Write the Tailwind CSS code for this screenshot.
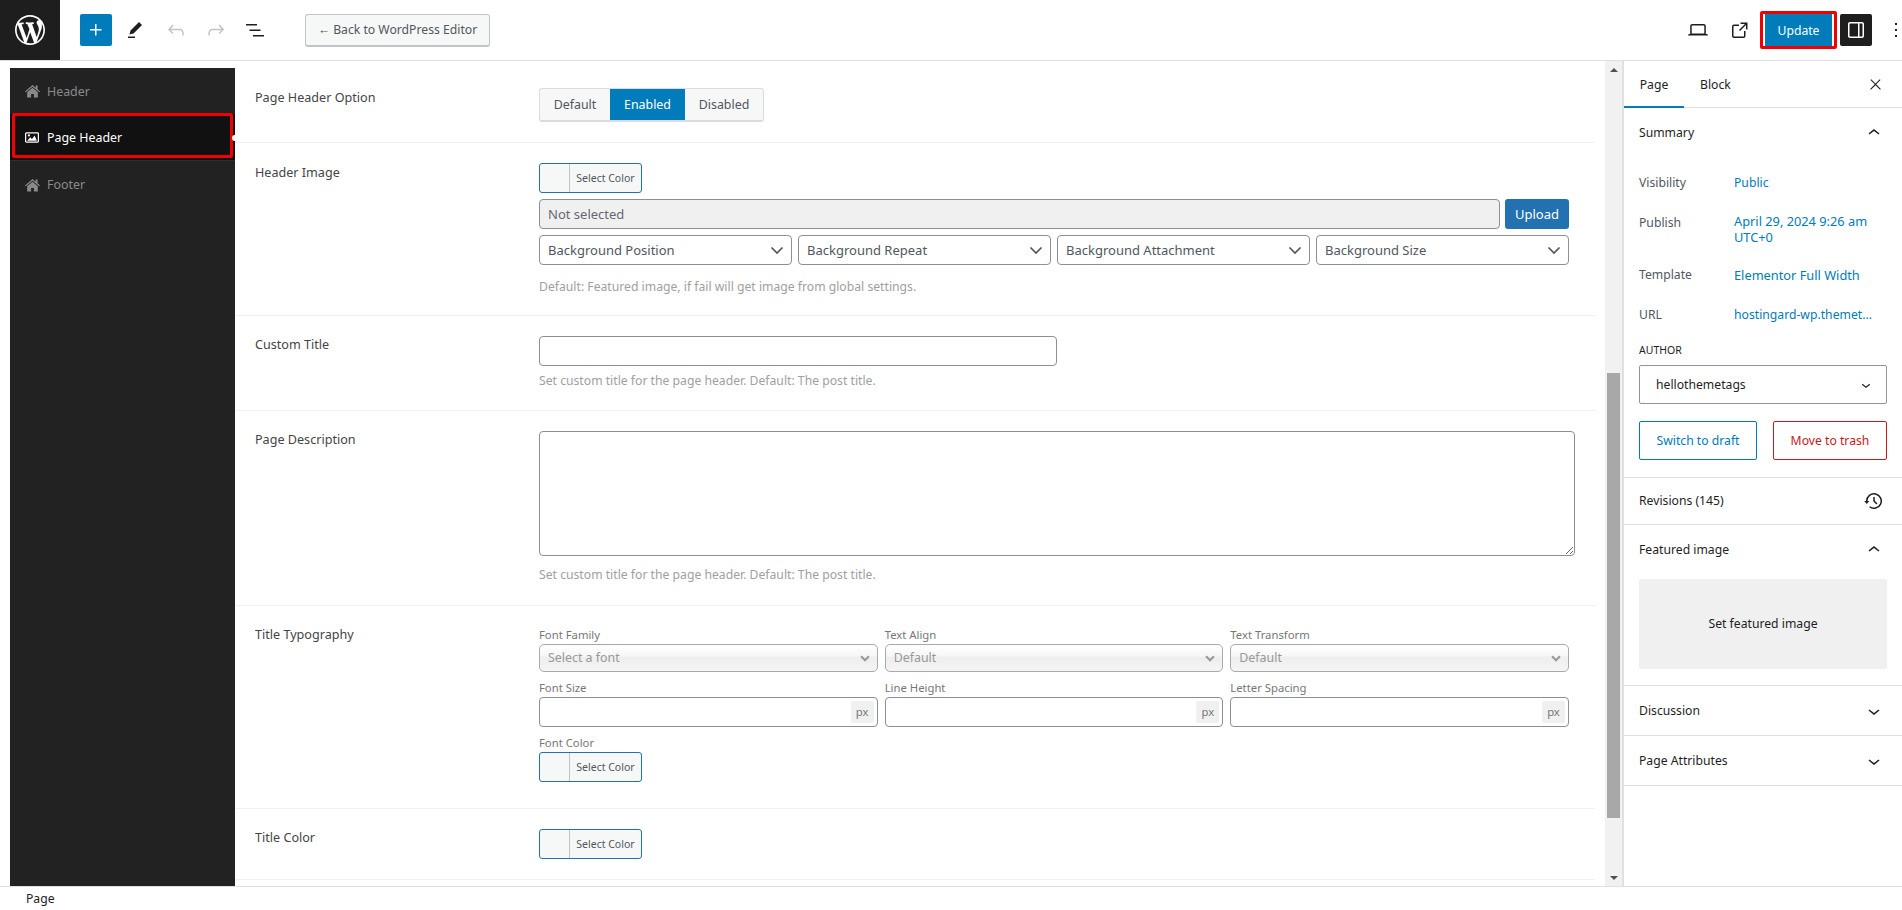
<!DOCTYPE html>
<html lang="en"><head><meta charset="utf-8"><title>Edit Page</title>
<script src="https://cdn.jsdelivr.net/npm/@tailwindcss/browser@4"></script></head>
<body class="bg-white">
<div class="flex h-[910px] w-[1902px] flex-col overflow-hidden font-['Noto_Sans','Open_Sans',sans-serif] text-[12.2px] leading-5 text-[#1e1e1e]">

<!-- top bar -->
<header class="flex h-[61px] shrink-0 items-center border-b border-[#e0e0e0]">
  <div class="flex h-[60px] w-[60px] items-center justify-center bg-[#1e1e1e]">
    <svg viewBox="0 0 20 20" class="h-[30px] w-[30px] fill-white"><path d="M20 10c0-5.51-4.49-10-10-10C4.48 0 0 4.49 0 10c0 5.52 4.48 10 10 10 5.51 0 10-4.48 10-10zM7.78 15.37L4.37 6.22c.55-.02 1.17-.08 1.17-.08.5-.06.44-1.13-.06-1.11 0 0-1.45.11-2.37.11-.18 0-.37 0-.58-.01C4.12 2.69 6.87 1.11 10 1.11c2.33 0 4.45.87 6.05 2.34-.68-.11-1.65.39-1.65 1.58 0 .74.45 1.36.9 2.1.35.61.55 1.36.55 2.46 0 1.49-1.4 5-1.4 5l-3.03-8.37c.54-.02.82-.17.82-.17.5-.05.44-1.25-.06-1.22 0 0-1.44.12-2.38.12-.87 0-2.33-.12-2.33-.12-.5-.03-.56 1.2-.06 1.22l.92.08 1.26 3.41zM17.41 10c.24-.64.74-1.87.43-4.25.7 1.29 1.05 2.71 1.05 4.25 0 3.29-1.73 6.24-4.4 7.78.97-2.59 1.94-5.2 2.92-7.78zM6.1 18.09C3.12 16.65 1.11 13.53 1.11 10c0-1.3.23-2.48.72-3.59C3.25 10.3 4.67 14.2 6.1 18.09zm4.03-6.63l2.58 6.98c-.86.29-1.76.45-2.71.45-.79 0-1.57-.11-2.29-.33.81-2.38 1.62-4.74 2.42-7.1z"/></svg>
  </div>
  <div class="ml-[20px] flex h-8 w-8 items-center justify-center rounded-[2px] bg-[#007cba]">
    <svg viewBox="0 0 24 24" class="h-6 w-6 fill-white"><path d="M11 12.5V17.5H12.5V12.5H17.5V11H12.5V6H11V11H6V12.5H11Z"/></svg>
  </div>
  <svg viewBox="0 0 24 24" class="ml-[11px] h-6 w-6 fill-[#1e1e1e]"><path d="m19 7-3-3-8.5 8.5-1 4 4-1L19 7Zm-7 11.5H5V20h7v-1.5Z"/></svg>
  <svg viewBox="0 0 24 24" class="ml-[17px] h-6 w-6 fill-[#c4c4c4]"><path d="M18.3 11.7c-.6-.6-1.4-.9-2.3-.9H6.7l2.9-3.3-1.1-1-4.5 5L8.5 16l1-1-2.7-2.7H16c.5 0 .9.2 1.3.5 1 1 1 3.4 1 4.5v.3h1.5v-.2c0-1.5 0-4.3-1.5-5.7z"/></svg>
  <svg viewBox="0 0 24 24" class="ml-[16px] h-6 w-6 fill-[#c4c4c4]"><path d="M15.6 6.5l-1.1 1 2.9 3.3H8c-.9 0-1.7.3-2.3.9-1.4 1.5-1.4 4.2-1.4 5.6v.2h1.5v-.3c0-1.1 0-3.5 1-4.5.3-.3.7-.5 1.3-.5h9.2L14.5 15l1.1 1.1 4.6-4.6-4.6-5z"/></svg>
  <svg viewBox="0 0 24 24" class="ml-[15px] h-6 w-6 fill-[#1e1e1e]"><path d="M3 6h11v1.5H3V6Zm3.5 5.5h11V13h-11v-1.5ZM21 17H10v1.5h11V17Z"/></svg>
  <div class="ml-[38px] flex h-[33px] w-[185px] items-center justify-center rounded-[3px] border border-b-2 border-[#c3c4c7] bg-[#f6f7f7] pt-[1px] text-[#50575e]">← Back to WordPress Editor</div>
  <div class="ml-auto flex items-center">
    <svg viewBox="0 0 24 24" class="h-6 w-6 fill-[#1e1e1e]"><path d="M20.5 16h-.7V8c0-1.1-.9-2-2-2H6.2c-1.1 0-2 .9-2 2v8h-.7c-.8 0-1.5.7-1.5 1.5h20c0-.8-.7-1.5-1.5-1.5zM5.7 8c0-.3.2-.5.5-.5h11.6c.3 0 .5.2.5.5v7.6H5.7V8z"/></svg>
    <svg viewBox="0 0 24 24" class="ml-[18px] h-6 w-6 fill-[#1e1e1e]"><path d="M19.5 4.5h-7V6h4.44l-5.97 6.01 1.06 1.06L18 7.07v4.43h1.5v-7Zm-13.5 2h5V8H6c-.28 0-.5.22-.5.5V18c0 .28.22.5.5.5h9.5c.28 0 .5-.22.5-.5v-5h1.5v5c0 1.1-.9 2-2 2H6c-1.1 0-2-.9-2-2V8.5c0-1.1.9-2 2-2Z"/></svg>
    <div class="relative ml-[8px] flex h-[38px] w-[77px] items-center justify-center">
      <div class="flex h-8 w-[67px] items-center justify-center bg-[#007cba] pt-[1px] text-white">Update</div>
      <div class="absolute inset-0 rounded-[2px] border-3 border-[#f00000]"></div>
    </div>
    <div class="ml-[3px] flex h-8 w-8 items-center justify-center rounded-[2px] bg-[#1e1e1e]">
      <svg viewBox="0 0 24 24" class="h-6 w-6 fill-white"><path d="M18 4H6c-1.1 0-2 .9-2 2v12c0 1.1.9 2 2 2h12c1.1 0 2-.9 2-2V6c0-1.1-.9-2-2-2zm-4 14.5H6c-.3 0-.5-.2-.5-.5V6c0-.3.2-.5.5-.5h8v13zm4.5-.5c0 .3-.2.5-.5.5h-2.5v-13H18c.3 0 .5.2.5.5v12z"/></svg>
    </div>
    <svg viewBox="0 0 24 24" class="ml-[12px] mr-[-6px] h-6 w-6 fill-[#1e1e1e]"><path d="M13 19h-2v-2h2v2zm0-6h-2v-2h2v2zm0-6h-2V5h2v2z"/></svg>
  </div>
</header>

<!-- middle -->
<div class="flex h-[825px] shrink-0">
  <div class="flex w-[1605px] overflow-hidden pl-[10px] pt-[7px]">
    <!-- tab nav -->
    <nav class="w-[225px] shrink-0 bg-[#222222] text-[12.4px] text-[#8a8a8a]">
      <div class="flex h-[46px] items-center gap-[7px] pl-[15px]">
        <svg viewBox="0 0 16 14" class="h-[14px] w-[15px] fill-[#8a8a8a]"><path d="M8 .6 0 7.4l.9 1L8 2.4l7.1 6 .9-1-2.6-2.2V1.2h-2v2.3L8 .6ZM8 3.6 2.3 8.4V14h4.2v-3.8h3V14h4.2V8.4L8 3.6Z"/></svg>
        <span class="pt-[1px]">Header</span>
      </div>
      <div class="relative flex h-[47px] items-center gap-[8px] border-b border-[#2e2e2e] bg-[#111111] pl-[15px] text-white">
        <svg viewBox="0 0 16 14" class="h-[13px] w-[14px]"><rect x=".7" y="1.7" width="14.6" height="10.6" rx="1" fill="none" stroke="#fff" stroke-width="1.4"/><path d="M2.5 10.8 6 6.8l2 2 3-4 2.6 6Z" fill="#fff"/><circle cx="4.5" cy="4.6" r="1.2" fill="#fff"/></svg>
        <span class="pt-[2px]">Page Header</span>
        <div class="absolute -top-px left-[2px] h-[45px] w-[221px] rounded-[2px] border-3 border-[#f00000]"></div>
        <div class="absolute -right-[3px] top-[21px] h-[6px] w-[6px] rounded-full bg-white"></div>
      </div>
      <div class="flex h-[47px] items-center gap-[7px] pl-[15px]">
        <svg viewBox="0 0 16 14" class="h-[14px] w-[15px] fill-[#8a8a8a]"><path d="M8 .6 0 7.4l.9 1L8 2.4l7.1 6 .9-1-2.6-2.2V1.2h-2v2.3L8 .6ZM8 3.6 2.3 8.4V14h4.2v-3.8h3V14h4.2V8.4L8 3.6Z"/></svg>
        <span class="pt-[1px]">Footer</span>
      </div>
    </nav>

    <!-- form -->
    <main class="w-[1360px] shrink-0 text-[13px] text-[#50575e]">
      <section class="flex h-[75px] border-b border-[#f0f0f0] pl-[20px] pt-[20px]">
        <h3 class="w-[284px] shrink-0 text-[12.6px] font-[450] text-[#444444]">Page Header Option</h3>
        <div class="flex h-[34px] w-[225px] overflow-hidden rounded-[3px] border border-b-2 border-[#dcdcde] bg-[#f6f7f7] text-[12.4px] text-[#50575e]">
          <div class="flex w-[70px] items-center justify-center">Default</div>
          <div class="flex w-[75px] items-center justify-center bg-[#007cba] font-[450] text-white">Enabled</div>
          <div class="flex flex-1 items-center justify-center">Disabled</div>
        </div>
      </section>

      <section class="flex h-[173px] border-b border-[#f0f0f0] pl-[20px] pt-[20px]">
        <h3 class="w-[284px] shrink-0 text-[12.6px] font-[450] text-[#444444]">Header Image</h3>
        <div class="w-[1030px]">
          <div class="flex h-[30px] w-[103px] overflow-hidden rounded-[3px] border border-[#2271b1] bg-[#f6f7f7] text-[10.5px]">
            <div class="w-[30px] border-r border-[#c3c4c7]"></div>
            <div class="flex flex-1 items-center justify-center">Select Color</div>
          </div>
          <div class="mt-[6px] flex gap-[5px]">
            <div class="flex h-[30px] flex-1 items-center rounded-[4px] border border-[#8c8f94] bg-[#f0f0f0] pl-[8px] text-[#646970]">Not selected</div>
            <div class="flex h-[30px] w-[64px] items-center justify-center rounded-[3px] bg-[#2271b1] text-white">Upload</div>
          </div>
          <div class="mt-[6px] grid grid-cols-4 gap-[6px]">
            <div class="flex h-[30px] items-center justify-between rounded-[4px] border border-[#8c8f94] pl-[8px] pr-[6px]"><span>Background Position</span><svg viewBox="0 0 16 16" class="h-4 w-4 fill-none stroke-[#50575e] stroke-[1.7]"><path d="m2.5 5.5 5.5 5.5 5.5-5.5"/></svg></div>
            <div class="flex h-[30px] items-center justify-between rounded-[4px] border border-[#8c8f94] pl-[8px] pr-[6px]"><span>Background Repeat</span><svg viewBox="0 0 16 16" class="h-4 w-4 fill-none stroke-[#50575e] stroke-[1.7]"><path d="m2.5 5.5 5.5 5.5 5.5-5.5"/></svg></div>
            <div class="flex h-[30px] items-center justify-between rounded-[4px] border border-[#8c8f94] pl-[8px] pr-[6px]"><span>Background Attachment</span><svg viewBox="0 0 16 16" class="h-4 w-4 fill-none stroke-[#50575e] stroke-[1.7]"><path d="m2.5 5.5 5.5 5.5 5.5-5.5"/></svg></div>
            <div class="flex h-[30px] items-center justify-between rounded-[4px] border border-[#8c8f94] pl-[8px] pr-[6px]"><span>Background Size</span><svg viewBox="0 0 16 16" class="h-4 w-4 fill-none stroke-[#50575e] stroke-[1.7]"><path d="m2.5 5.5 5.5 5.5 5.5-5.5"/></svg></div>
          </div>
          <p class="mt-[12px] text-[12.2px] text-[#a0a0a0]">Default: Featured image, if fail will get image from global settings.</p>
        </div>
      </section>

      <section class="flex h-[95px] border-b border-[#f0f0f0] pl-[20px] pt-[20px]">
        <h3 class="w-[284px] shrink-0 -mt-px text-[12.6px] font-[450] text-[#444444]">Custom Title</h3>
        <div>
          <input type="text" aria-label="Custom Title" class="block h-[30px] w-[518px] rounded-[4px] border border-[#8c8f94] bg-white">
          <p class="mt-[5px] text-[12.2px] text-[#a0a0a0]">Set custom title for the page header. Default: The post title.</p>
        </div>
      </section>

      <section class="flex h-[195px] border-b border-[#f0f0f0] pl-[20px] pt-[20px]">
        <h3 class="w-[284px] shrink-0 -mt-px text-[12.6px] font-[450] text-[#444444]">Page Description</h3>
        <div>
          <textarea aria-label="Page Description" class="block h-[125px] w-[1036px] rounded-[4px] border border-[#8c8f94] bg-white"></textarea>
          <p class="mt-[9px] text-[12.2px] text-[#a0a0a0]">Set custom title for the page header. Default: The post title.</p>
        </div>
      </section>

      <section class="flex h-[203px] border-b border-[#f0f0f0] pl-[20px] pt-[20px]">
        <h3 class="w-[284px] shrink-0 -mt-px text-[12.6px] font-[450] text-[#444444]">Title Typography</h3>
        <div class="w-[1030px] text-[11.3px] text-[#777777]">
          <div class="grid grid-cols-3 gap-x-[7px]">
            <div>
              <div class="h-[18px] leading-[18px]">Font Family</div>
              <div class="flex h-[28px] items-center justify-between rounded-[5px] border border-[#aaaaaa] bg-[linear-gradient(180deg,#ffffff_0%,#f7f7f7_40%,#eeeeee_50%,#f5f5f5_100%)] pl-[8px] pr-[5px] text-[12.4px] text-[#999999]"><span>Select a font</span><svg viewBox="0 0 16 16" class="h-[14px] w-[14px] fill-none stroke-[#999999] stroke-[2.4]"><path d="m3.5 6 4.5 4.5 4.5-4.5"/></svg></div>
            </div>
            <div>
              <div class="h-[18px] leading-[18px]">Text Align</div>
              <div class="flex h-[28px] items-center justify-between rounded-[5px] border border-[#aaaaaa] bg-[linear-gradient(180deg,#ffffff_0%,#f7f7f7_40%,#eeeeee_50%,#f5f5f5_100%)] pl-[8px] pr-[5px] text-[12.4px] text-[#999999]"><span>Default</span><svg viewBox="0 0 16 16" class="h-[14px] w-[14px] fill-none stroke-[#999999] stroke-[2.4]"><path d="m3.5 6 4.5 4.5 4.5-4.5"/></svg></div>
            </div>
            <div>
              <div class="h-[18px] leading-[18px]">Text Transform</div>
              <div class="flex h-[28px] items-center justify-between rounded-[5px] border border-[#aaaaaa] bg-[linear-gradient(180deg,#ffffff_0%,#f7f7f7_40%,#eeeeee_50%,#f5f5f5_100%)] pl-[8px] pr-[5px] text-[12.4px] text-[#999999]"><span>Default</span><svg viewBox="0 0 16 16" class="h-[14px] w-[14px] fill-none stroke-[#999999] stroke-[2.4]"><path d="m3.5 6 4.5 4.5 4.5-4.5"/></svg></div>
            </div>
          </div>
          <div class="mt-[6px] grid grid-cols-3 gap-x-[7px]">
            <div>
              <div class="h-[19px] leading-[19px]">Font Size</div>
              <div class="flex h-[30px] items-center justify-end rounded-[4px] border border-[#8c8f94] pr-[3px]"><span class="flex h-[22px] w-[23px] items-center justify-center rounded-[2px] bg-[#f0f0f0]">px</span></div>
            </div>
            <div>
              <div class="h-[19px] leading-[19px]">Line Height</div>
              <div class="flex h-[30px] items-center justify-end rounded-[4px] border border-[#8c8f94] pr-[3px]"><span class="flex h-[22px] w-[23px] items-center justify-center rounded-[2px] bg-[#f0f0f0]">px</span></div>
            </div>
            <div>
              <div class="h-[19px] leading-[19px]">Letter Spacing</div>
              <div class="flex h-[30px] items-center justify-end rounded-[4px] border border-[#8c8f94] pr-[3px]"><span class="flex h-[22px] w-[23px] items-center justify-center rounded-[2px] bg-[#f0f0f0]">px</span></div>
            </div>
          </div>
          <div class="mt-[6px] h-[19px] leading-[19px]">Font Color</div>
          <div class="flex h-[30px] w-[103px] overflow-hidden rounded-[3px] border border-[#2271b1] bg-[#f6f7f7] text-[10.5px] text-[#50575e]">
            <div class="w-[30px] border-r border-[#c3c4c7]"></div>
            <div class="flex flex-1 items-center justify-center">Select Color</div>
          </div>
        </div>
      </section>

      <section class="flex h-[71px] border-b border-[#f0f0f0] pl-[20px] pt-[20px]">
        <h3 class="w-[284px] shrink-0 -mt-px text-[12.6px] font-[450] text-[#444444]">Title Color</h3>
        <div class="flex h-[30px] w-[103px] overflow-hidden rounded-[3px] border border-[#2271b1] bg-[#f6f7f7] text-[10.5px]">
          <div class="w-[30px] border-r border-[#c3c4c7]"></div>
          <div class="flex flex-1 items-center justify-center">Select Color</div>
        </div>
      </section>
    </main>
  </div>

  <!-- scrollbar -->
  <div class="flex w-[17px] shrink-0 flex-col items-center bg-[#f1f1f1]">
    <div class="flex h-[17px] w-full items-center justify-center"><div class="h-0 w-0 border-x-[4px] border-b-[4px] border-x-transparent border-b-[#505050]"></div></div>
    <div class="h-[295px]"></div>
    <div class="h-[445px] w-[13px] bg-[#a8a8a8]"></div>
    <div class="flex-1"></div>
    <div class="flex h-[17px] w-full items-center justify-center"><div class="h-0 w-0 border-x-[4px] border-t-[4px] border-x-transparent border-t-[#505050]"></div></div>
  </div>

  <!-- settings sidebar -->
  <aside class="w-[280px] shrink-0 border-l-2 border-[#e0e0e0]">
    <div class="flex h-[47px] items-center border-b border-[#e0e0e0]">
      <div class="flex h-[47px] w-[60px] items-center justify-center border-b-2 border-[#007cba] pt-[3px] font-[450]">Page</div>
      <div class="ml-[16px] pt-[1px] font-[450]">Block</div>
      <svg viewBox="0 0 24 24" class="ml-auto mr-[18px] h-[17px] w-[17px] fill-[#1e1e1e]"><path d="M13 11.8l6.1-6.3-1-1-6.1 6.2-6.1-6.2-1 1 6.1 6.3-6.5 6.7 1 1 6.5-6.6 6.5 6.6 1-1z"/></svg>
    </div>

    <section class="h-[370px] border-b border-[#e0e0e0] pl-[15px] pr-[15px]">
      <div class="flex h-[50px] items-center justify-between font-[450]">Summary<svg viewBox="0 0 24 24" class="mr-[1px] h-6 w-6 fill-[#1e1e1e]"><path d="M6.5 12.4L12 8l5.5 4.4-.9 1.2L12 10l-4.5 3.6-1-1.2z"/></svg></div>
      <div class="mt-[4px] flex h-[40px] pt-[11px]"><span class="w-[95px] text-[#50575e]">Visibility</span><span class="text-[#007cba]">Public</span></div>
      <div class="flex h-[52px] pt-[11px]"><span class="w-[95px] text-[#50575e]">Publish</span><span class="text-[12.8px] leading-[16px] text-[#007cba]">April 29, 2024 9:26 am<br>UTC+0</span></div>
      <div class="flex h-[40px] pt-[11px]"><span class="w-[95px] text-[#50575e]">Template</span><span class="text-[12.8px] text-[#007cba]">Elementor Full Width</span></div>
      <div class="flex h-[40px] pt-[11px]"><span class="w-[95px] text-[#50575e]">URL</span><span class="text-[#007cba]">hostingard-wp.themet...</span></div>
      <div class="mt-[10px] h-[12px] text-[10.5px] uppercase leading-3">Author</div>
      <div class="mt-[9px] flex h-[39px] items-center justify-between rounded-[2px] border border-[#949494] pl-[16px] pr-[11px]"><span>hellothemetags</span><svg viewBox="0 0 24 24" class="h-[18px] w-[18px] fill-[#1e1e1e]"><path d="M17.5 11.6L12 16l-5.5-4.4.9-1.2L12 14l4.5-3.6 1 1.2z"/></svg></div>
      <div class="mt-[17px] flex justify-between">
        <div class="flex h-[39px] w-[118px] items-center justify-center rounded-[2px] border border-[#007cba] text-[#007cba]">Switch to draft</div>
        <div class="flex h-[39px] w-[114px] items-center justify-center rounded-[2px] border border-[#cc1818] text-[#cc1818]">Move to trash</div>
      </div>
    </section>

    <section class="flex h-[47px] items-center justify-between border-b border-[#e0e0e0] pl-[15px] pr-[15px] font-[450]">Revisions (145)<svg viewBox="0 0 24 24" class="mr-[1px] h-6 w-6 fill-[#1e1e1e]"><path d="M5.5 12h1.75l-2.5 3-2.5-3H4a8 8 0 113.134 6.35l.907-1.194A6.5 6.5 0 105.5 12zm9.53 1.97l-2.28-2.28V8.5a.75.75 0 00-1.5 0V12c0 .199.079.39.22.53l2.5 2.5a.75.75 0 101.06-1.06z"/></svg></section>

    <section class="h-[161px] border-b border-[#e0e0e0] pl-[15px] pr-[15px]">
      <div class="flex h-[50px] items-center justify-between font-[450]">Featured image<svg viewBox="0 0 24 24" class="mr-[1px] h-6 w-6 fill-[#1e1e1e]"><path d="M6.5 12.4L12 8l5.5 4.4-.9 1.2L12 10l-4.5 3.6-1-1.2z"/></svg></div>
      <div class="mt-[4px] flex h-[90px] items-center justify-center rounded-[2px] bg-[#f0f0f0]">Set featured image</div>
    </section>

    <section class="flex h-[50px] items-center justify-between border-b border-[#e0e0e0] pl-[15px] pr-[15px] font-[450]">Discussion<svg viewBox="0 0 24 24" class="mr-[1px] h-6 w-6 fill-[#1e1e1e]"><path d="M17.5 11.6L12 16l-5.5-4.4.9-1.2L12 14l4.5-3.6 1 1.2z"/></svg></section>
    <section class="flex h-[50px] items-center justify-between border-b border-[#e0e0e0] pl-[15px] pr-[15px] font-[450]">Page Attributes<svg viewBox="0 0 24 24" class="mr-[1px] h-6 w-6 fill-[#1e1e1e]"><path d="M17.5 11.6L12 16l-5.5-4.4.9-1.2L12 14l4.5-3.6 1 1.2z"/></svg></section>
  </aside>
</div>

<footer class="flex h-[24px] shrink-0 items-center border-t border-[#e0e0e0] pl-[26px]">Page</footer>
</div>
</body></html>
